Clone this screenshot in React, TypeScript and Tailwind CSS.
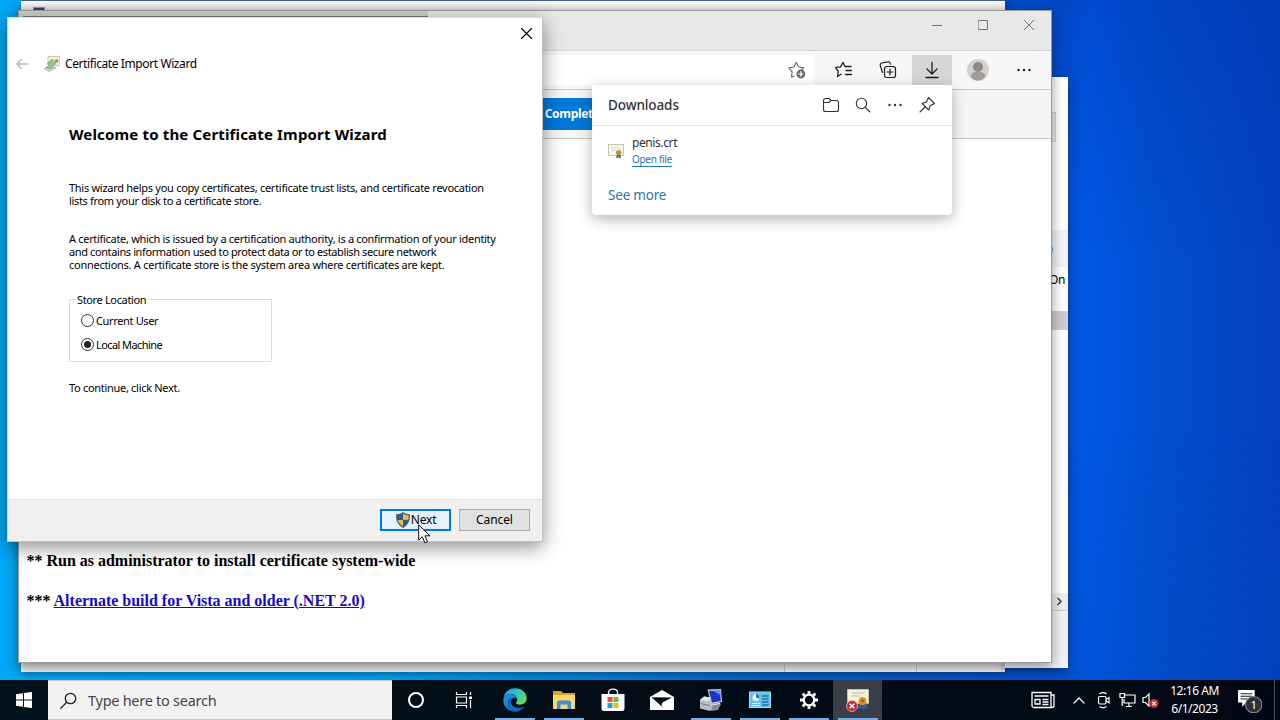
import type { ReactNode } from "react";

const ui = "font-['Noto_Sans','Open_Sans',sans-serif]";

function Icon({ size = 20, box = 20, className = "", children }: { size?: number; box?: number; className?: string; children: ReactNode }) {
  return (
    <svg
      width={size}
      height={size}
      viewBox={`0 0 ${box} ${box}`}
      fill="none"
      stroke="currentColor"
      strokeLinecap="round"
      strokeLinejoin="round"
      className={`shrink-0 ${className}`}
    >
      {children}
    </svg>
  );
}

function Dots({ className = "" }: { className?: string }) {
  return (
    <Icon className={className}>
      <g fill="currentColor" stroke="none">
        <circle cx="4.5" cy="10" r="1.2" />
        <circle cx="10" cy="10" r="1.2" />
        <circle cx="15.5" cy="10" r="1.2" />
      </g>
    </Icon>
  );
}

/* Window at the very back, only its edges are visible */
function BackWindow() {
  return (
    <div className="absolute left-[21px] top-0 flex h-[672px] w-[984px] flex-col justify-between border-t border-[#3d628f] bg-white shadow-[0_2px_8px_rgba(0,0,0,0.3)]">
      <div className="h-[10px] bg-linear-to-b from-white to-[#dedbd7] pl-3 pt-[6px]">
        <div className="h-1 w-3 border border-[#8c93b8] bg-[#35407c]" />
      </div>
      <div className="flex h-3 justify-end bg-linear-to-b from-[#d5d5d5] to-[#f4f4f4]">
        <div className="w-[133px] border-x border-[#c8c8c8]" />
        <div className="w-[88px]" />
      </div>
    </div>
  );
}

function ConsoleWindow() {
  return (
    <div className="absolute left-[1005px] top-[77px] flex h-[591px] w-[63px] flex-col items-end bg-white shadow-[0_3px_10px_rgba(0,0,0,0.35)]">
      <div className="mr-3 mt-[35px] h-[30px] w-10 border border-[#d2d2d2] bg-[#ececec]" />
      <div className="mt-[88px] flex h-[37px] w-full items-center justify-end bg-[#f3f3f3] pr-[15px] text-[13px] text-[#222]">
        )
      </div>
      <div className={`h-[44px] pr-[3px] pt-[4px] text-[12px] leading-[18px] tracking-[-0.4px] text-black ${ui}`}>On</div>
      <div className="h-[19px] w-full bg-[#cdcdcd]" />
      <div className="grow" />
      <div className="flex h-[18px] w-full items-center justify-end border-b border-[#cccccc] bg-[#eeeeee] pr-1">
        <Icon size={9} box={9} className="text-[#444]">
          <path d="M3 1.5 6 4.5 3 7.5" strokeWidth="1.7" />
        </Icon>
      </div>
      <div className="h-[57px] w-full bg-[#f0f2f4]" />
    </div>
  );
}

function DownloadsPanel() {
  return (
    <div className={`absolute left-[573px] top-[74px] h-[130px] w-[360px] rounded-b bg-white shadow-[0_4px_14px_rgba(0,0,0,0.3)] ${ui}`}>
      <div className="flex h-[41px] items-center border-b border-[#e3e3e3] pl-4 pr-[15px] text-[#333]">
        <span className="grow text-[13.5px] font-medium tracking-[-0.1px]">Downloads</span>
        <div className="flex items-center gap-3">
          <Icon>
            <path d="M2.500 5.500a2 2 0 0 1 2-2h3.500l2 2h5.500a2 2 0 0 1 2 2v7a2 2 0 0 1-2 2h-11a2 2 0 0 1-2-2ZM2.500 7.500H8l2-2" strokeWidth="1.1" />
          </Icon>
          <Icon>
            <circle cx="8.5" cy="8.5" r="5.2" strokeWidth="1.1" />
            <path d="m12.5 12.5 4.5 4.5" strokeWidth="1.1" />
          </Icon>
          <Dots />
          <Icon>
            <path d="m11.5 2.5 6 6-4.3 2.3-1.5 4.2-6.5-6.5 4.2-1.6ZM8 12l-5 5" strokeWidth="1.1" />
          </Icon>
        </div>
      </div>
      <div className="flex gap-2 pl-4 pt-[9px]">
        <svg width="16" height="16" viewBox="0 0 16 16" className="mt-[8px]">
          <rect x="0.5" y="1.5" width="15" height="11" fill="#f7f5ee" stroke="#c9c6bc" />
          <path d="M3 5h9M3 7.5h6" stroke="#dedbd2" />
          <path d="m9 11-1 4.500 2.500-1.200L13 15.500 12.500 11Z" fill="#3566b0" />
          <circle cx="10.700" cy="9.700" r="2.600" fill="#c99224" />
        </svg>
        <div className="flex flex-col items-start">
          <span className="text-[12px] leading-4 tracking-[-0.4px] text-[#333]">penis.crt</span>
          <span className="mt-px border-b border-[#1a77b8] text-[10px] leading-[14px] tracking-[-0.3px] text-[#1a77b8]">Open file</span>
        </div>
      </div>
      <div className="pl-4 pt-[18px] text-[13.5px] leading-5 tracking-[-0.2px] text-[#2a77a9]">See more</div>
    </div>
  );
}

function Browser() {
  return (
    <div className="absolute left-[18px] top-[10px] flex h-[653px] w-[1034px] flex-col border border-[#9a9a9a] bg-white shadow-[0_4px_12px_rgba(0,0,0,0.4)]">
      <div className="flex h-10 justify-end border-b border-[#d5d5d5] bg-[#e8e8e8] text-[#777]">
        <div className="flex h-7 w-[46px] items-center justify-center">
          <Icon size={10} box={10}><path d="M0 5.500h10" /></Icon>
        </div>
        <div className="flex h-7 w-[46px] items-center justify-center">
          <Icon size={10} box={10}><path d="M.5.5h9v9h-9Z" /></Icon>
        </div>
        <div className="-mr-px flex h-7 w-[46px] items-center justify-center">
          <Icon size={10} box={10}><path d="m0 0 10 10M10 0 0 10" /></Icon>
        </div>
      </div>
      <div className="flex h-[39px] items-center justify-end border-b border-[#c9c9c9] bg-[#f7f7f7] text-[#1d1d1d]">
        <div className="flex h-[30px] grow items-center justify-end bg-white pr-[7px] text-[#666]">
          <Icon>
            <path d="M7 16.200 4.500 17l.6-5.200L1.800 8l5-1L9.300 2.500 11.700 7l5 .9-2 2.200" strokeWidth="1.1" />
            <circle cx="13.900" cy="14" r="4.400" fill="#666" stroke="none" />
            <path d="M11.600 14h4.600M13.900 11.700v4.600" stroke="#fff" strokeWidth="1.200" />
          </Icon>
        </div>
        <div className="ml-5 flex items-center gap-6">
          <Icon>
            <path d="m7 14.200-3.500 2.300.8-5.300L1.500 7.700l5-.8L9 2.500l2 4h6M12 10.500h5.500M11.500 14.500h6" strokeWidth="1.3" />
          </Icon>
          <Icon>
            <rect x="6.500" y="6.500" width="11" height="11" rx="2.200" strokeWidth="1.2" />
            <path d="M12 9v6M9 12h6M4.500 12.500 2.300 5.800A2.200 2.200 0 0 1 3.700 3l6-1.200a2 2 0 0 1 2.500 1.400l.3 1" strokeWidth="1.2" />
          </Icon>
        </div>
        <div className="ml-[14px] flex h-[30px] w-10 items-center justify-center bg-[#d6d6d6]">
          <Icon>
            <path d="M10 2.500v11M5 9l5 5 5-5" strokeWidth="1.3" />
            <path d="M4 17.500h12" strokeWidth="1.3" />
          </Icon>
        </div>
        <svg width="22" height="22" viewBox="0 0 22 22" className="ml-[15px]">
          <circle cx="11" cy="11" r="11" fill="#d3d0ce" />
          <circle cx="11" cy="8" r="5" fill="#8e8a87" />
          <path d="M4 18c0-5 3-5 7-5s7 0 7 5c-3.500 4.500-10.500 4.500-14 0Z" fill="#a19c98" />
        </svg>
        <Dots className="ml-[25px] mr-[17px]" />
      </div>
      <div className="flex h-[49px] shrink-0 items-center border-b border-[#c6c6c6] bg-[#f5f5f5]">
        <div className={`flex h-8 w-[574px] items-center justify-end bg-[#0078d7] text-[12px] font-bold tracking-[-0.3px] text-white ${ui}`}>Complet</div>
      </div>
      <div className="mt-[411px] pl-[7.500px] font-['Liberation_Serif',serif] text-[16px] font-bold leading-[22px] tracking-[-0.01px] text-black">
        <p>** Run as administrator to install certificate system-wide</p>
        <p className="mt-[18px]">
          *** <span className="text-[#1508d0] underline">Alternate build for Vista and older (.NET 2.0)</span>
        </p>
      </div>
      <DownloadsPanel />
    </div>
  );
}

function Radio({ label, checked }: { label: string; checked?: boolean }) {
  return (
    <div className="flex items-center gap-[2px]">
      <div className="flex size-[13px] items-center justify-center rounded-full border border-[#333]">
        {checked && <div className="size-[7px] rounded-full bg-[#222]" />}
      </div>
      <span>{label}</span>
    </div>
  );
}

function Wizard() {
  return (
    <div className={`absolute left-[7px] top-[17px] flex h-[525px] w-[536px] flex-col border border-[#c4c4c4] border-t-[#e0e0e0] border-l-[#d0d0d0] bg-white text-black shadow-[0_5px_18px_rgba(0,0,0,0.45)] ${ui}`}>
      <div className="flex h-[30px] items-center justify-end pr-[11px]">
        <Icon size={11} box={11} className="mr-[-0.5px]"><path d="m.5.5 10 10M10.500.5l-10 10" strokeWidth="1.1" /></Icon>
      </div>
      <div className="flex h-[31px] items-center pl-2 text-[12px]">
        <Icon size={12} box={13} className="text-[#b5b5b5]">
          <path d="M12 6.500H1M6 1.500l-5 5 5 5" strokeWidth="1.500" />
        </Icon>
        <svg width="18" height="18" viewBox="0 0 18 18" className="ml-[15px]">
          <path d="M5 1.500h11.500v9H5Z" fill="#f3eddb" stroke="#d3c9ac" />
          <path d="M1 13.500 8 11l5 2-7 3.500Z" fill="#dde0dd" stroke="#9aa39d" strokeWidth=".7" />
          <path d="M3 12c2 0 3-1 3-3H4l5-5 4 5h-2c0 3-3 5.500-6 5Z" fill="#8cc592" stroke="#5f9c6b" strokeWidth=".6" />
          <circle cx="13.500" cy="6" r="1.800" fill="#bf8244" />
        </svg>
        <span className="ml-[4px] tracking-[-0.4px]">Certificate Import Wizard</span>
      </div>
      <div className="flex grow flex-col items-start pl-[61px] pt-[44px] text-[11px] leading-[13px]">
        <h1 className="whitespace-nowrap text-[15px] font-bold leading-[22px] tracking-[0.16px]">Welcome to the Certificate Import Wizard</h1>
        <p className="mt-[36px] whitespace-nowrap tracking-[-0.28px]">
          This wizard helps you copy certificates, certificate trust lists, and certificate revocation
          <br />
          <span className="tracking-[-0.33px]">lists from your disk to a certificate store.</span>
        </p>
        <p className="mt-[25px] whitespace-nowrap tracking-[-0.31px]">
          A certificate, which is issued by a certification authority, is a confirmation of your identity
          <br />
          <span className="tracking-[-0.39px]">and contains information used to protect data or to establish secure network</span>
          <br />
          <span className="tracking-[-0.27px]">connections. A certificate store is the system area where certificates are kept.</span>
        </p>
        <fieldset className="mt-[22px] h-[69px] w-[203px] border border-[#dcdcdc] pl-[11px]">
          <legend className="-ml-[6px] px-[2px] tracking-[-0.35px]">Store Location</legend>
          <div className="mt-[8px] flex flex-col gap-[11px]">
            <div className="tracking-[-0.35px]">
              <Radio label="Current User" />
            </div>
            <div className="tracking-[-0.58px]">
              <Radio label="Local Machine" checked />
            </div>
          </div>
        </fieldset>
        <p className="mt-[19px] tracking-[-0.3px]">To continue, click Next.</p>
      </div>
      <div className="flex h-[42px] items-center justify-end gap-2 border-t border-[#dfdfdf] bg-[#f0f0f0] pb-[2px] pr-3 text-[12px]">
        <div className="flex h-[22px] w-[71px] items-center justify-center border-2 border-[#0078d7] bg-[#e5f1fb]">
          <svg width="16" height="16" viewBox="0 0 16 16">
            <path d="M8 .5c2 1.500 4 2 6.500 2 .3 6-1.500 10.500-6.500 13C3 13 1.200 8.500 1.500 2.500 4 2.500 6 2 8 .5Z" fill="#245f9e" stroke="#50565c" strokeWidth=".8" />
            <path d="M8 1.500C9.800 2.700 11.500 3.300 13.700 3.400c0 1.600-.1 3-.5 4.400H8ZM2.700 8H8v6.500C5 12.700 3.400 10.500 2.700 8Z" fill="#f7bd35" />
          </svg>
          <span className="tracking-[-0.2px]">Next</span>
        </div>
        <div className="flex h-[22px] w-[71px] items-center justify-center border border-[#adadad] bg-[#e1e1e1] tracking-[-0.1px]">Cancel</div>
      </div>
    </div>
  );
}

function TaskItem({ open, active, children }: { open?: boolean; active?: boolean; children: ReactNode }) {
  return (
    <div className={`flex w-[49px] items-center justify-center ${active ? "bg-[#383f49]" : ""}`}>
      <div className={`flex h-10 w-10 items-center justify-center border-b-2 pt-[2px] ${open ? "border-[#76aee8]" : "border-transparent"}`}>
        {children}
      </div>
    </div>
  );
}

function Taskbar() {
  return (
    <div className={`absolute bottom-0 left-0 flex h-10 w-full items-center bg-linear-to-r from-[#02131c] via-[#020d18] to-[#020914] text-white ${ui}`}>
      <div className="flex w-12 justify-center">
        <svg width="16" height="16" viewBox="0 0 16 16" fill="#fff">
          <path d="M0 2.200 7 1.200V7.500H0ZM8 1 16 0V7.500H8ZM0 8.500h7v6.300l-7-1ZM8 8.500h8V16l-8-1Z" />
        </svg>
      </div>
      <div className="flex h-10 w-[344px] items-center border-y border-[#c9c9c9] bg-[#f2f2f2] pl-3 text-[#444]">
        <Icon size={17} box={17} className="text-[#222]">
          <circle cx="10.500" cy="6.500" r="5.200" strokeWidth="1.300" />
          <path d="M6.500 10.500.8 16.200" strokeWidth="1.300" />
        </Icon>
        <span className="ml-[11px] pt-px text-[14.5px] tracking-[-0.27px]">Type here to search</span>
      </div>
      <div className="flex">
        <TaskItem>
          <Icon size={18} box={18} className="-ml-[2px]"><circle cx="9" cy="9" r="7" strokeWidth="2" /></Icon>
        </TaskItem>
        <TaskItem>
          <svg width="18" height="18" viewBox="0 0 18 18" fill="none" stroke="#fff" strokeWidth="1.200" className="-ml-[3px]">
            <path d="M1.500 1v2.500h10V1M1.500 17v-2.500h10V17M1.500 6h10v6h-10ZM15.500 1v3M15.500 9v8" />
            <path d="M14 5.500h3V8h-3Z" fill="#fff" stroke="none" />
          </svg>
        </TaskItem>
        <TaskItem open>
          <svg width="24" height="24" viewBox="0 0 24 24">
            <defs>
              <linearGradient id="edge-top" x1="0" y1="0" x2="1" y2=".6">
                <stop offset="0" stopColor="#1a9be0" />
                <stop offset=".5" stopColor="#2fc2c9" />
                <stop offset="1" stopColor="#65db61" />
              </linearGradient>
              <linearGradient id="edge-left" x1="0" y1="0" x2="1" y2="1">
                <stop offset="0" stopColor="#2199e6" />
                <stop offset="1" stopColor="#0b57b0" />
              </linearGradient>
            </defs>
            <path d="M.5 10C1.500 4 6.200.3 12 .3c6.800 0 11.700 4.700 11.700 10 0 4.200-3.200 6.400-6.700 6.400-2.500 0-4-.9-4-2 0-.8 1.300-1.500 1.300-3.200C14.300 8.500 11.500 6 7.700 6 4.400 6 1.800 7.500.5 10Z" fill="url(#edge-top)" />
            <path d="M.3 12.500C.3 8.700 3.500 6.200 7.300 6.200c4 0 7 2.300 7 5.300-1-1.700-2.700-2-3.600-1.500-4.700 1.800-3.700 9 3.500 9.700 3 .3 5.500-.4 7.500-1.800-2 3.500-5.600 5.800-9.800 5.800C5.300 23.700.3 18.500.3 12.500Z" fill="url(#edge-left)" />
            <path d="M10.700 10c-5.500 2.500-5 10.500 1.800 13.700C6.500 22.500 3.300 17.500 5 13c1-2.500 3.200-3.800 5.700-3Z" fill="#1260b8" />
          </svg>
        </TaskItem>
        <TaskItem open>
          <svg width="22" height="20" viewBox="0 0 22 20">
            <path d="M0 1h8l2 2h12v16H0Z" fill="#dba22b" />
            <path d="M0 5h22v14H0Z" fill="#fbd66d" />
            <path d="M4 19v-6.500A2 2 0 0 1 6 10.500h10a2 2 0 0 1 2 2V19h-3.500v-4.500h-7V19Z" fill="#3b8fd5" />
          </svg>
        </TaskItem>
        <TaskItem>
          <svg width="24" height="24" viewBox="0 0 24 24">
            <path d="M7.500 7V4.500C7.500 0 16.500 0 16.500 4.500V7" fill="none" stroke="#fff" strokeWidth="1.300" />
            <path d="M.5 6h23v14.500a2.500 2.500 0 0 1-2.500 2.500H3A2.500 2.500 0 0 1 .5 20.500Z" fill="#fff" />
            <path d="M6.500 9h5v5h-5Z" fill="#e8532b" />
            <path d="M12.500 9h5v5h-5Z" fill="#7cb82f" />
            <path d="M6.500 15h5v5h-5Z" fill="#22a1e2" />
            <path d="M12.500 15h5v5h-5Z" fill="#f5b81c" />
          </svg>
        </TaskItem>
        <TaskItem>
          <svg width="24" height="20" viewBox="0 0 24 20">
            <path d="M0 7 12 0l12 7v13H0Z" fill="#fff" />
            <path d="m1.500 7.200 20.500.2-9.500 5-1 3 2.500 3Z" fill="#020d18" />
          </svg>
        </TaskItem>
        <TaskItem open>
          <svg width="24" height="24" viewBox="0 0 24 24">
            <path d="M9 14h11l2 2-3 6-7 1Z" fill="#878e98" />
            <path d="m8.500 1.500 13.500-.5 1 13-11 2Z" fill="#c7cdd8" />
            <path d="m10 3 11-.5.8 10.500-9 1.500Z" fill="#1a35c8" />
            <path d="m14 2.800 7-.3.3 4.500Z" fill="#6b8cf2" />
            <path d="m1 12 4-3.500 7 1 1 11-2 2.500-10-2.500Z" fill="#b9bec5" />
            <path d="m1 12 4-3.500 7 1-2.500 4Z" fill="#e4e6e0" />
            <path d="m1.500 15.500 9 2" stroke="#737a84" />
            <path d="m12 17 9-1.500" stroke="#e2e5e9" />
          </svg>
        </TaskItem>
        <TaskItem open>
          <svg width="22" height="18" viewBox="0 0 22 18">
            <rect x=".5" y="1" width="21" height="15.500" fill="#65bfe9" stroke="#a5ddf4" />
            <circle cx="7" cy="6.500" r="3.500" fill="#e9f7fd" />
            <path d="M7 6.500V3a3.500 3.500 0 0 1 3.300 4.500Z" fill="#2d6ca8" />
            <path d="M3 12.500h8M3 14.500h8" stroke="#e5f6fd" />
            <path d="M13 5h6.500M13 8h6.500M13 11h6.500M13 14h6.500" stroke="#1b75ac" strokeWidth="1.500" />
          </svg>
        </TaskItem>
        <TaskItem open>
          <svg width="20" height="20" viewBox="0 0 20 20" fill="none" stroke="#fff">
            <circle cx="10" cy="10" r="5.300" strokeWidth="2.300" />
            <path d="M10 1v3M10 16v3M1 10h3M16 10h3M3.600 3.600l2.200 2.200M14.200 14.200l2.200 2.200M3.600 16.400l2.200-2.200M14.200 5.800l2.200-2.200" strokeWidth="2.800" />
          </svg>
        </TaskItem>
        <TaskItem open active>
          <svg width="24" height="24" viewBox="0 0 24 24">
            <path d="M1.500 1.500h21v14h-21Z" fill="#f6f0dc" stroke="#c9bea0" />
            <path d="M6 5h13M5 8h9" stroke="#c4bca8" />
            <path d="m13.500 14-2 7 3-1 3 2 2-2 2.500 1-2-7Z" fill="#315f9e" />
            <circle cx="16.500" cy="13" r="4" fill="#d89a20" />
            <circle cx="16.500" cy="13" r="1.800" fill="#a56a12" />
            <circle cx="6" cy="18" r="5.500" fill="#c4292e" stroke="#e5b9b9" strokeWidth=".8" />
            <path d="m3.700 15.700 4.600 4.600M8.300 15.700l-4.600 4.600" stroke="#fff" strokeWidth="1.600" />
          </svg>
        </TaskItem>
      </div>
      <div className="ml-auto flex items-center">
        <svg width="24" height="18" viewBox="0 0 24 18" fill="none" stroke="#fff" strokeWidth="1.300">
          <path d="M1 1.500h19v15H3a2 2 0 0 1-2-2ZM20 4h3v10.500a2 2 0 0 1-2 2h-2" />
          <path d="M3.500 5h14M11.500 8.500h6M11.500 11h6M11.500 13.500h6" />
          <path d="M4 8.500h5V13H4Z" />
        </svg>
        <Icon size={12} box={12} className="ml-[18px]"><path d="M1 9 6 4l5 5" strokeWidth="1.200" /></Icon>
        <svg width="14" height="18" viewBox="0 0 14 18" fill="none" stroke="#fff" strokeWidth="1.200" className="ml-[12px]">
          <rect x="1.500" y="5.500" width="7.500" height="7.500" rx="1.500" />
          <path d="m9 8.500 3-2v5.500l-3-2M2.500 3c2-1.500 5-1.500 7 0M2.500 15.500c2 1.500 5 1.500 7 0" />
        </svg>
        <svg width="17" height="16" viewBox="0 0 17 16" fill="none" stroke="#fff" strokeWidth="1.200" className="ml-[8px]">
          <path d="M6 3h10v8H5V7M7 14.500h6M10 11v3.500M1 1.500h4.500v4H1ZM3.200 5.500V14" />
        </svg>
        <svg width="17" height="16" viewBox="0 0 17 16" fill="none" className="ml-[6px]">
          <path d="M1 5.500h2.500L7 2v12L3.500 10.500H1Z" stroke="#fff" strokeWidth="1.200" />
          <circle cx="12" cy="11.500" r="4.500" fill="#d02b2b" />
          <path d="m10.200 9.700 3.600 3.600M13.800 9.700l-3.600 3.600" stroke="#fff" strokeWidth="1.200" />
        </svg>
        <div className="ml-[6px] w-[59px] whitespace-nowrap text-center text-[12px] leading-[18px] tracking-[-0.45px]">
          <div>12:16 AM</div>
          <div>6/1/2023</div>
        </div>
        <svg width="25" height="25" viewBox="0 0 24 24" className="ml-[13px]">
          <path d="M1 2h16v12H9l-4 4v-4H1Z" fill="#fff" />
          <path d="M3.500 5.500h11M3.500 8h11M3.500 10.500h7" stroke="#17202c" />
          <circle cx="16" cy="16" r="7.800" fill="#2c3239" stroke="#848a91" />
          <text x="16" y="20" textAnchor="middle" fontSize="11" fill="#fff">1</text>
        </svg>
        <div className="ml-[12px] h-10 w-[6px] border-l border-[#4c535c]" />
      </div>
    </div>
  );
}

export default function App() {
  return (
    <div className="relative h-[720px] w-[1280px] overflow-hidden bg-[linear-gradient(90deg,#00a8f5_0%,#00a0ee_30%,#0768c8_60%,#0353d2_83%,#0058e6_85%,#024fcf_90%,#0540be_100%)]">
      <div className="absolute inset-0 bg-[linear-gradient(180deg,rgba(0,50,170,0.35)_0%,transparent_35%,transparent_60%,rgba(0,70,180,0.25)_100%)] [mask-image:linear-gradient(90deg,transparent_50%,black_80%)]" />
      <BackWindow />
      <ConsoleWindow />
      <Browser />
      {/* Strip of a dialog hidden behind the wizard */}
      <div className="absolute left-[19px] top-[11px] h-[7px] w-[409px] bg-[#cfcfcd] pl-1 pt-[5px]">
        <div className="h-[2px] border-t border-[#777] bg-[#e3e3e3]" />
      </div>
      <Wizard />
      <Taskbar />
      <svg width="14" height="21" viewBox="0 0 14 21" className="absolute left-[418px] top-[524px]">
        <path d="M.7.900v15.300l3.600-3.400 2.600 6 2.600-1.100L7 11.800h5Z" fill="#fff" stroke="#111" />
      </svg>
    </div>
  );
}
